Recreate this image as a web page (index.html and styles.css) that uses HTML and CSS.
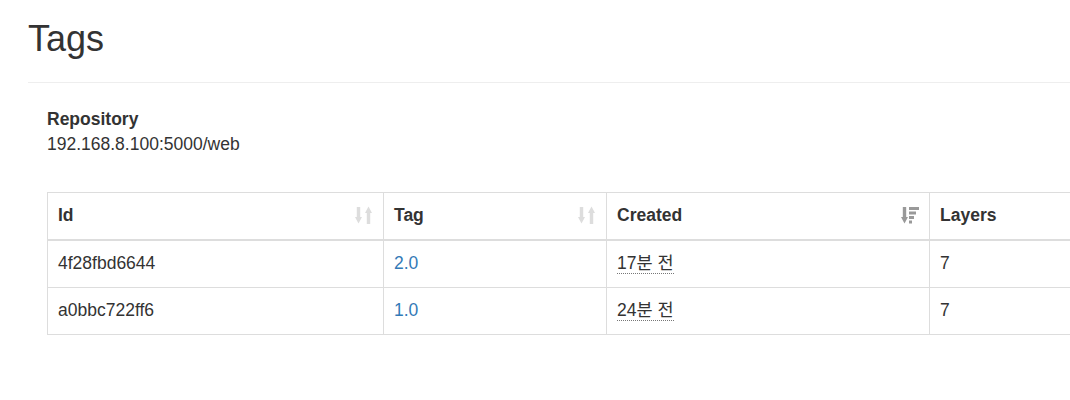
FILE: index.html
```html
<!DOCTYPE html>
<html lang="ko">
<head>
<meta charset="utf-8">
<title>Tags</title>
<link rel="stylesheet" href="styles.css">
</head>
<body>
<div class="page">
  <div class="page-header">
    <h1>Tags</h1>
  </div>
  <div class="content">
    <dl class="repo">
      <dt>Repository</dt>
      <dd>192.168.8.100:5000/web</dd>
    </dl>
    <div class="table-wrap">
    <table class="tags">
      <thead>
        <tr>
          <th class="c-id"><div class="th-in"><span>Id</span>
            <svg class="sort" viewBox="0 0 18 18"><rect x="1.8" y="1" width="3.4" height="11"/><polygon points="0,11 7,11 3.5,17.5"/><polygon points="10,7 17,7 13.5,0.5"/><rect x="11.8" y="6" width="3.4" height="12"/></svg>
          </div></th>
          <th class="c-tag"><div class="th-in"><span>Tag</span>
            <svg class="sort" viewBox="0 0 18 18"><rect x="1.8" y="1" width="3.4" height="11"/><polygon points="0,11 7,11 3.5,17.5"/><polygon points="10,7 17,7 13.5,0.5"/><rect x="11.8" y="6" width="3.4" height="12"/></svg>
          </div></th>
          <th class="c-created"><div class="th-in"><span>Created</span>
            <svg class="sort active" viewBox="0 0 18 18"><rect x="1.8" y="1" width="3.4" height="11"/><polygon points="0,11 7,11 3.5,17.5"/><rect x="8" y="1" width="10" height="3"/><rect x="8" y="5.5" width="7" height="3"/><rect x="8" y="10" width="5" height="3"/><rect x="8" y="14.5" width="3" height="3"/></svg>
          </div></th>
          <th class="c-layers"><div class="th-in"><span>Layers</span></div></th>
        </tr>
      </thead>
      <tbody>
        <tr>
          <td>4f28fbd6644</td>
          <td><a href="#">2.0</a></td>
          <td><abbr title="2017-01-01 12:00">17분 전</abbr></td>
          <td>7</td>
        </tr>
        <tr>
          <td>a0bbc722ff6</td>
          <td><a href="#">1.0</a></td>
          <td><abbr title="2017-01-01 11:53">24분 전</abbr></td>
          <td>7</td>
        </tr>
      </tbody>
    </table>
    </div>
  </div>
</div>
</body>
</html>
```

FILE: styles.css
```css
html, body {
  overflow: hidden;
}
body {
  margin: 0;
  background: #fff;
  color: #333;
  font-family: "Liberation Sans", Arial, "Noto Sans CJK KR", sans-serif;
  font-size: 17.5px;
  line-height: 25px;
}
.page {
  padding-left: 28px;
}
.page-header {
  padding-top: 19px;
  padding-bottom: 23.4px;
  border-bottom: 1px solid #eee;
}
.page-header h1 {
  margin: 0;
  font-size: 36px;
  font-weight: 500;
  line-height: 39.6px;
}
.content {
  padding: 24px 0 0 19px;
}
.repo {
  margin: 0;
}
.repo dt {
  font-weight: bold;
}
.repo dd {
  margin: 0;
}
.table-wrap {
  margin-top: 35px;
  overflow: hidden;
}
.tags {
  border-collapse: separate;
  border-spacing: 0;
  table-layout: fixed;
  width: 1183px;
  border-top: 1px solid #ddd;
  border-left: 1px solid #ddd;
}
.tags th,
.tags td {
  box-sizing: border-box;
  padding: 10px 10px 11px;
  border-right: 1px solid #ddd;
  border-bottom: 1px solid #ddd;
  text-align: left;
  vertical-align: top;
}
.tags th {
  font-weight: bold;
  border-bottom-width: 2px;
}
.c-id { width: 336px; }
.c-tag { width: 223px; }
.c-created { width: 323px; }
.c-layers { width: 300px; }
.th-in {
  display: flex;
  justify-content: space-between;
  align-items: center;
}
.sort {
  width: 18px;
  height: 18px;
  fill: #ddd;
  flex: none;
}
.sort.active {
  fill: #999;
}
.tags a {
  color: #337ab7;
  text-decoration: none;
}
.tags abbr {
  text-decoration: none;
  border-bottom: 1px dotted #777;
  cursor: help;
}
```
